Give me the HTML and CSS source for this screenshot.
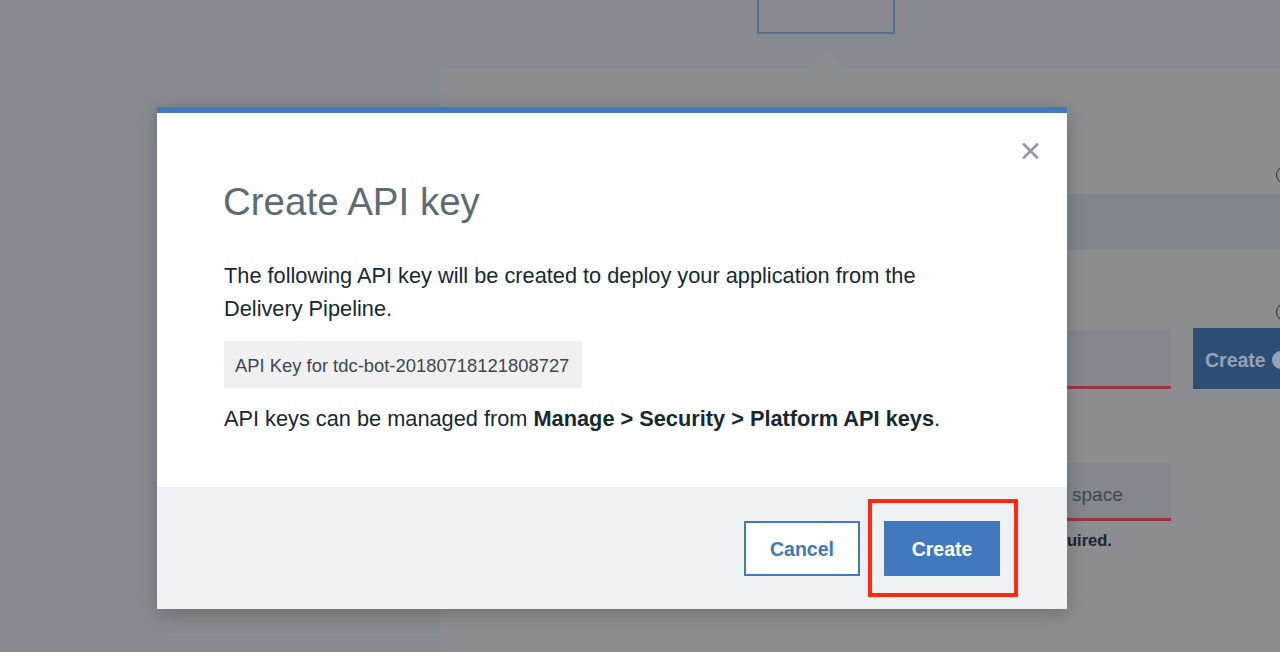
FILE: index.html
```html
<!DOCTYPE html>
<html lang="en">
<head>
<meta charset="utf-8">
<title>Create API key</title>
<link rel="stylesheet" href="styles.css">
</head>
<body>
<div class="app">
  <div class="tabbar">
    <div class="tab">
      <div class="tab-box"></div>
      <div class="caret"></div>
    </div>
  </div>
  <div class="panel">
    <div class="form">
      <div class="label-row first"><span class="info"></span></div>
    </div>
    <div class="band"></div>
    <div class="form">
      <div class="label-row second"><span class="info"></span></div>
      <div class="field-row">
        <div class="field"></div>
        <div class="bg-btn">Create <span class="plus"></span></div>
      </div>
      <div class="field field-two"><span class="field-text">space</span></div>
      <div class="req">uired.</div>
    </div>
  </div>
</div>

<div class="modal" role="dialog" aria-labelledby="modal-title">
  <button class="close" aria-label="Close">
    <svg width="17" height="16" viewBox="0 0 17 16"><path d="M2 1.5 L15 14.5 M15 1.5 L2 14.5" stroke="#8c9ba5" stroke-width="2.6" stroke-linecap="square" fill="none"/></svg>
  </button>
  <div class="modal-body">
    <h1 class="modal-title" id="modal-title">Create API key</h1>
    <p class="text">The following API key will be created to deploy your application from the Delivery Pipeline.</p>
    <div class="key-box">API Key for tdc-bot-20180718121808727</div>
    <p class="text note">API keys can be managed from <strong>Manage &gt; Security &gt; Platform API keys</strong>.</p>
  </div>
  <div class="modal-footer">
    <button class="btn btn-secondary">Cancel</button>
    <div class="btn-wrap">
      <button class="btn btn-primary">Create</button>
      <span class="highlight"></span>
    </div>
  </div>
</div>
</body>
</html>
```

FILE: styles.css
```css
* { box-sizing: border-box; }

html, body {
  margin: 0;
  padding: 0;
}

body {
  width: 1280px;
  height: 652px;
  overflow: hidden;
  background: #878a8e;
  font-family: "Liberation Sans", Arial, sans-serif;
  position: relative;
}

.app {
  display: flex;
  flex-direction: column;
  height: 652px;
}

.tabbar {
  height: 69px;
  display: flex;
}

.tab {
  margin-left: 757px;
  width: 138px;
  display: flex;
  flex-direction: column;
  align-items: center;
  justify-content: space-between;
}

.tab-box {
  width: 138px;
  height: 34px;
  border: 2px solid #56708f;
  border-top: none;
}

.caret {
  width: 0;
  height: 0;
  border-left: 19px solid transparent;
  border-right: 19px solid transparent;
  border-bottom: 18px solid #8b8d90;
}

.panel {
  margin-left: 441px;
  flex: 1;
  background: #8b8d90;
  display: flex;
  flex-direction: column;
  padding-top: 97px;
}

.form {
  margin-left: 259px;
  width: 640px;
  display: flex;
  flex-direction: column;
}

.label-row {
  height: 18px;
  display: flex;
}

.label-row.first { margin-bottom: 10px; }
.label-row.second { margin-top: 53px; margin-bottom: 7px; }

.info {
  margin-left: 576px;
  width: 18px;
  height: 18px;
  border: 1.5px solid #2c343b;
  border-radius: 50%;
}

.band {
  height: 56px;
  background: #81868c;
}

.field-row {
  display: flex;
  align-items: flex-end;
  gap: 22px;
  height: 61px;
}

.field {
  width: 471px;
  height: 59px;
  background: #84888d;
  border-bottom: 3px solid #9a3543;
  flex-shrink: 0;
}

.bg-btn {
  width: 120px;
  height: 61px;
  background: #2c4d76;
  color: #93a2b4;
  font-weight: bold;
  font-size: 19.5px;
  display: flex;
  align-items: center;
  padding: 3px 0 0 12px;
  gap: 6px;
  white-space: nowrap;
  flex-shrink: 0;
}

.plus {
  width: 18px;
  height: 18px;
  border-radius: 50%;
  background: #93a2b4;
  flex-shrink: 0;
}

.field-two {
  margin-top: 74px;
  height: 58px;
  display: flex;
  align-items: center;
  padding: 8px 0 0 372px;
  overflow: hidden;
}

.field-text {
  font-size: 19px;
  color: #3d4650;
  white-space: nowrap;
}

.req {
  margin-top: 9px;
  padding-left: 367px;
  font-size: 16.5px;
  line-height: 20px;
  font-weight: bold;
  color: #1b2731;
  white-space: nowrap;
}

/* Modal */
.modal {
  position: absolute;
  top: 107px;
  left: 157px;
  width: 910px;
  background: #ffffff;
  border-top: 6px solid #4178be;
  box-shadow: 0 4px 18px rgba(0, 0, 0, 0.22);
  display: flex;
  flex-direction: column;
}

.close {
  position: absolute;
  top: 30px;
  right: 28px;
  width: 17px;
  height: 16px;
  padding: 0;
  border: none;
  background: transparent;
  display: flex;
}

.modal-body {
  padding: 66px 67px 52px 67px;
  color: #152935;
  display: flex;
  flex-direction: column;
  align-items: flex-start;
}

.modal-title {
  margin: 0 0 0 -1px;
  font-size: 38.5px;
  line-height: 46px;
  font-weight: normal;
  color: #5d6b75;
}

.text {
  margin: 0;
  font-size: 21.75px;
  line-height: 33px;
  width: 720px;
}

.text:first-of-type { margin-top: 34px; }

.text strong { font-weight: bold; }

.key-box {
  margin-top: 16px;
  background: #f0f0f0;
  font-size: 18.4px;
  line-height: 45px;
  height: 47px;
  padding: 2px 13px 0 11px;
  color: #3d4750;
  white-space: nowrap;
}

.note { margin-top: 14px; width: auto; }

.modal-footer {
  height: 122px;
  background: #eff2f5;
  display: flex;
  justify-content: flex-end;
  align-items: flex-start;
  gap: 24px;
  padding: 34px 67px 0 0;
}

.btn {
  width: 116px;
  height: 55px;
  font-family: "Liberation Sans", Arial, sans-serif;
  font-size: 19.5px;
  font-weight: bold;
  border: 2px solid #4178be;
  padding: 2px 0 0;
  cursor: pointer;
}

.btn-secondary {
  background: #ffffff;
  color: #4178be;
}

.btn-primary {
  background: #4178be;
  color: #ffffff;
}

.btn-wrap {
  position: relative;
  display: flex;
}

.highlight {
  position: absolute;
  top: -22px;
  left: -16px;
  right: -18px;
  bottom: -21px;
  border: 4px solid #ff2a0d;
  pointer-events: none;
}
```
